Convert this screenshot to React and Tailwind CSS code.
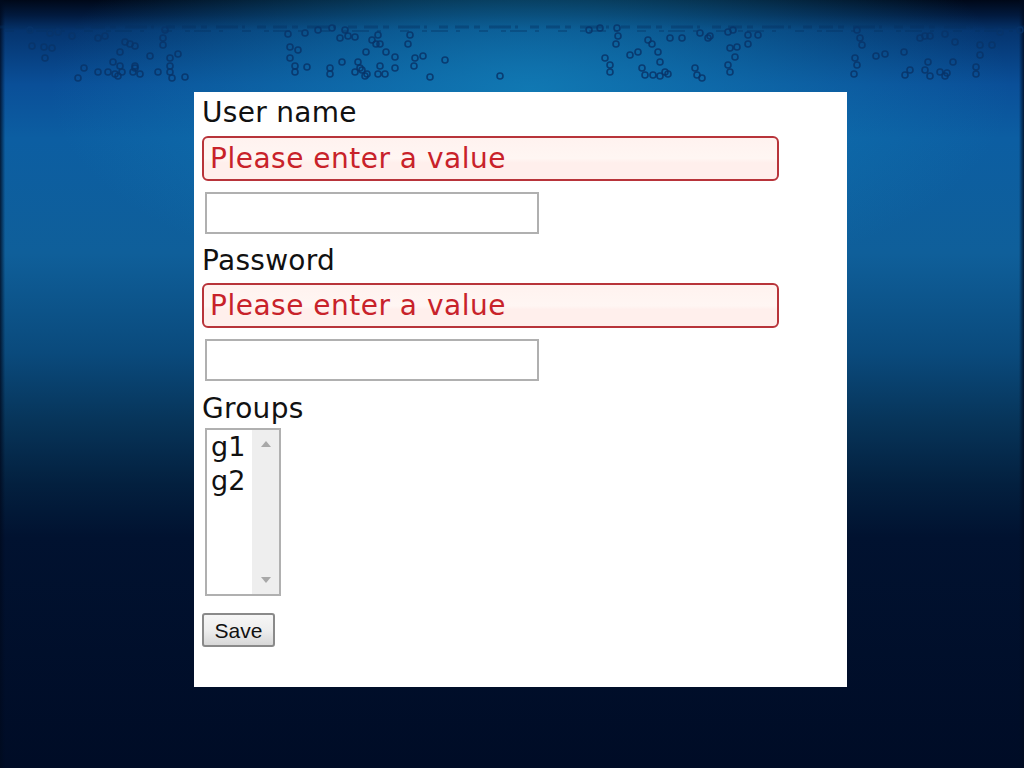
const bubbles = [
  [30,30],[50,33],[58,32],[72,36],[98,38],[105,36],[165,30],[163,38],[163,45],[130,44],[125,42],[135,46],[32,46],[44,47],[52,48],[45,58],[120,52],[150,56],[170,58],[178,54],[170,66],[113,62],[120,66],[135,68],[108,72],[115,74],[122,72],[118,76],[133,72],[140,74],[135,66],[98,72],[158,72],[170,72],[172,78],[185,77],[84,68],[78,78],[288,34],[305,33],[318,30],[332,28],[345,30],[340,38],[348,36],[355,37],[378,35],[376,44],[372,40],[380,44],[410,35],[408,44],[290,47],[298,50],[290,58],[366,52],[386,52],[395,57],[342,62],[358,62],[360,68],[395,68],[415,58],[423,56],[414,66],[445,60],[295,66],[307,67],[295,72],[330,68],[330,74],[355,72],[362,70],[367,74],[380,66],[378,74],[365,76],[385,74],[430,77],[500,76],
  [589,30],[600,28],[617,28],[618,36],[616,44],[648,40],[652,44],[605,58],[610,65],[630,55],[638,52],[658,52],[610,72],[642,68],[645,75],[660,62],[665,72],[660,76],[668,74],[653,75],[695,68],[697,75],[702,78],[700,33],[710,36],[728,32],[733,30],[708,38],[682,38],[670,38],[730,48],[737,47],[748,44],[758,35],[728,65],[730,72],[735,57],[748,35],[857,30],[860,38],[862,45],[855,58],[857,65],[854,74],[876,56],[885,54],[904,52],[930,36],[925,36],[920,38],[905,75],[910,70],[925,70],[930,76],[940,72],[945,76],[928,62],[953,62],[947,73],[976,67],[976,74],[980,45],[992,45],[980,55],[955,42],[1020,30],[945,34],[1000,32],
]

function ErrorBox() {
  return (
    <div className="mt-[5px] flex h-[45px] w-[577px] items-center rounded-md border-2 border-[#b8343a] bg-[linear-gradient(#fff2ef_0%,#fff6f3_50%,#ffefec_60%,#ffefec_100%)] pl-[6px] text-[28px] leading-none tracking-[0.5px] text-[#c8222a]">
      Please enter a value
    </div>
  )
}

function TextField() {
  return <input type="text" className="mt-[11px] ml-[3px] block h-[42px] w-[334px] border-2 border-[#b0b0b0] bg-white outline-none" />
}

export default function App() {
  return (
    <div className="relative h-[768px] w-[1024px] overflow-hidden bg-[linear-gradient(90deg,rgba(0,10,30,0.8)_0%,rgba(0,10,30,0)_0.5%,rgba(0,10,30,0)_99.5%,rgba(0,10,30,0.8)_100%),radial-gradient(ellipse_480px_210px_at_530px_90px,rgba(18,130,185,0.8),rgba(18,130,185,0)),linear-gradient(180deg,#000818_0%,#021a3e_2%,#05346e_4%,#0a4f98_11%,#0c5ea2_18%,#0f5f9a_33%,#0a4a7c_46%,#073459_55%,#03203f_63%,#011230_70%,#000c26_100%)] font-['DejaVu_Sans',sans-serif]">
      <svg className="absolute top-0 left-0 blur-[0.7px]" width="1024" height="90" viewBox="0 0 1024 90" fill="none">
        <line x1="0" y1="27" x2="1024" y2="27" stroke="#06305f" strokeOpacity="0.4" strokeWidth="3" strokeDasharray="14 5 6 9 22 4 3 12 9 7" />
        <line x1="5" y1="31" x2="1024" y2="31" stroke="#06305f" strokeOpacity="0.35" strokeWidth="2" strokeDasharray="9 13 5 4 17 8 4 19" />
        {bubbles.map(([x, y], i) => (
          <circle key={i} cx={x} cy={y} r={3} stroke="#083468" strokeOpacity="0.85" strokeWidth="1.6" />
        ))}
      </svg>
      <div className="relative ml-[194px] flex h-[768px] w-[653px] flex-col pt-[92px]">
        <div className="h-[595px] bg-white px-2 pt-[3px] text-[28px] leading-[36px] tracking-[0.3px] text-[#111]">
          <div>User name</div>
          <ErrorBox />
          <TextField />
          <div className="mt-[9px] h-[35px]">Password</div>
          <ErrorBox />
          <TextField />
          <div className="mt-[10px]">Groups</div>
          <div className="mt-[1px] ml-[3px] flex h-[168px] w-[76px] border-2 border-[#b0b0b0]">
            <div className="flex-1 pl-[4px] text-[27px] leading-[34px] tracking-normal">
              <div>g1</div>
              <div>g2</div>
            </div>
            <div className="flex w-[27px] flex-col items-center justify-between bg-[#eeeeee] py-[11px]">
              <div className="h-0 w-0 border-x-[5px] border-b-[6px] border-x-transparent border-b-[#a8a8a8]" />
              <div className="h-0 w-0 border-x-[5px] border-t-[6px] border-x-transparent border-t-[#a8a8a8]" />
            </div>
          </div>
          <button type="button" className="mt-[17px] block h-[34px] w-[73px] rounded-[3px] border-2 border-[#8a8a8a] bg-[linear-gradient(#f6f6f6_0%,#eeeeee_50%,#d8d8d8_100%)] font-['Liberation_Sans',sans-serif] text-[21px] leading-none tracking-normal text-[#111]">
            Save
          </button>
        </div>
      </div>
    </div>
  )
}
